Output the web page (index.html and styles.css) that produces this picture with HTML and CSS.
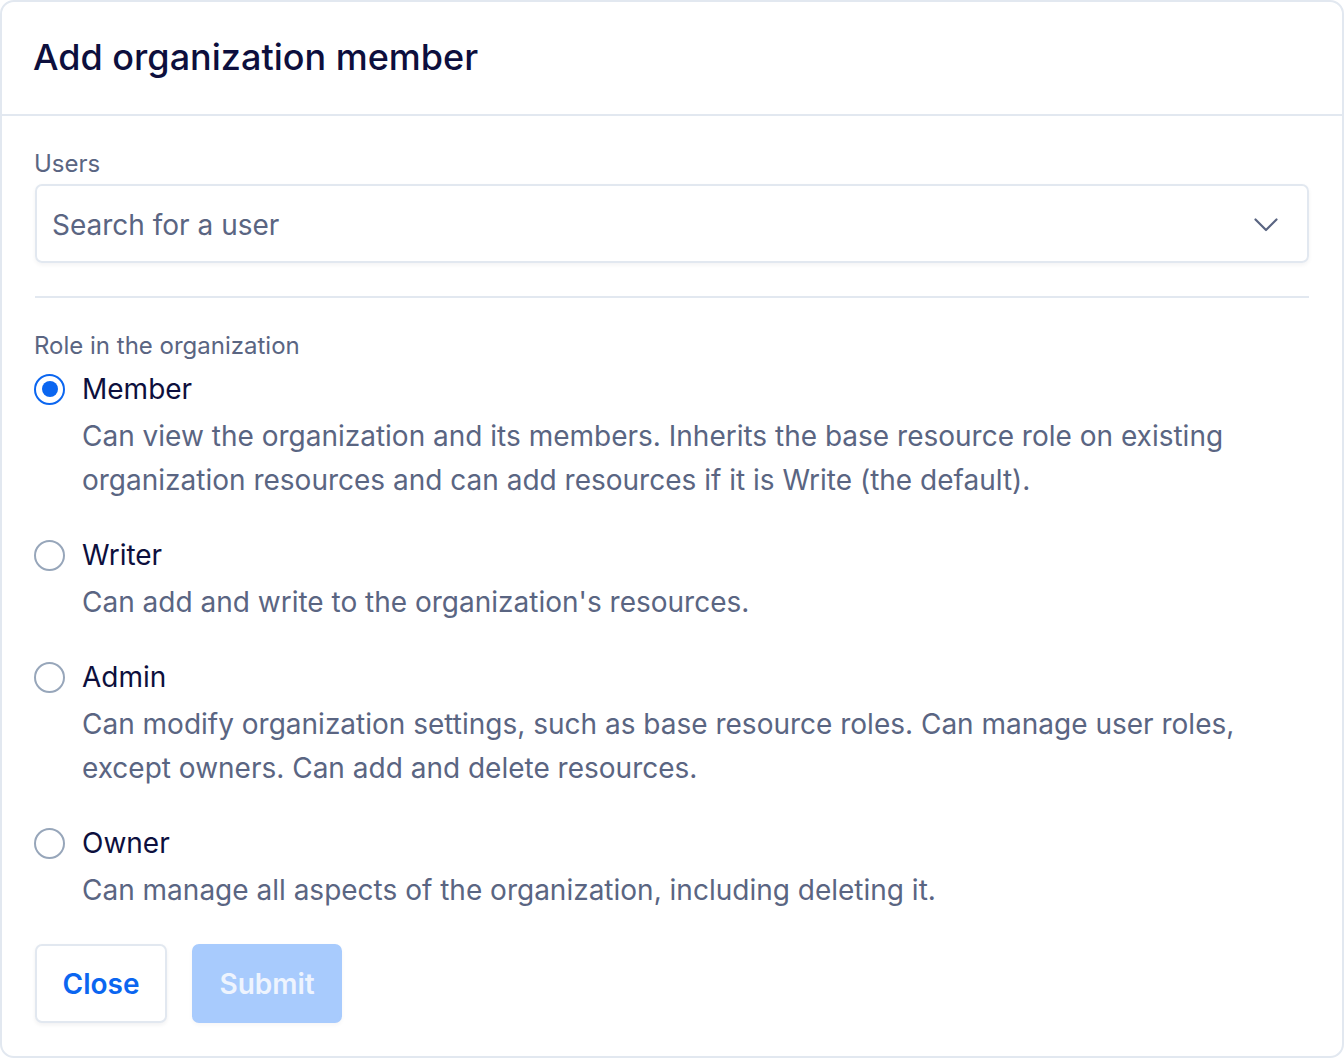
FILE: index.html
```html
<!DOCTYPE html>
<html lang="en">
<head>
<meta charset="utf-8">
<title>Add organization member</title>
<link rel="stylesheet" href="styles.css">
</head>
<body>
<div class="modal">
  <div class="modal-header">
    <h1 class="modal-title">Add organization member</h1>
  </div>
  <div class="modal-body">
    <label class="field-label">Users</label>
    <div class="select">
      <span class="select-placeholder">Search for a user</span>
      <svg class="chevron" width="24" height="14" viewBox="0 0 24 14" fill="none"><path d="M1.5 1.5 L12 12 L22.5 1.5" stroke="#5a6582" stroke-width="2.2" stroke-linecap="round" stroke-linejoin="round"/></svg>
    </div>
    <hr class="divider">
    <div class="field-label">Role in the organization</div>
    <div class="options">
      <div class="option">
        <div class="option-row"><span class="radio checked"></span><span class="option-label">Member</span></div>
        <p class="option-desc">Can view the organization and its members. Inherits the base resource role on existing organization resources and can add resources if it is Write (the default).</p>
      </div>
      <div class="option">
        <div class="option-row"><span class="radio"></span><span class="option-label">Writer</span></div>
        <p class="option-desc">Can add and write to the organization's resources.</p>
      </div>
      <div class="option">
        <div class="option-row"><span class="radio"></span><span class="option-label">Admin</span></div>
        <p class="option-desc">Can modify organization settings, such as base resource roles. Can manage user roles, except owners. Can add and delete resources.</p>
      </div>
      <div class="option">
        <div class="option-row"><span class="radio"></span><span class="option-label">Owner</span></div>
        <p class="option-desc">Can manage all aspects of the organization, including deleting it.</p>
      </div>
    </div>
    <div class="actions">
      <button class="btn btn-secondary">Close</button>
      <button class="btn btn-primary" disabled>Submit</button>
    </div>
  </div>
</div>
</body>
</html>
```
FILE: styles.css
```css
* { box-sizing: border-box; }
html, body { margin: 0; padding: 0; background: #ffffff; }
body {
  font-family: Inter, "Noto Sans", sans-serif;
  color: #0d0f3d;
  width: 1344px;
  height: 1058px;
}
.modal {
  width: 1344px;
  height: 1058px;
  border: 2px solid #e2e8f0;
  border-radius: 14px;
  background: #fff;
  display: flex;
  flex-direction: column;
}
.modal-header {
  height: 114px;
  border-bottom: 2px solid #e2e8f0;
  padding: 0 31px;
  display: flex;
  align-items: center;
}
.modal-title {
  margin: 0;
  font-size: 36px;
  font-weight: 500;
  line-height: 44px;
  color: #0d0f3d;
  margin-top: -2px;
}
.modal-body {
  padding: 32px 33px 0 33px;
  display: flex;
  flex-direction: column;
}
.field-label {
  display: block;
  font-size: 24px;
  line-height: 32px;
  color: #5a6582;
  margin-left: -1px;
}
.select {
  margin-top: 4px;
  height: 79px;
  border: 2px solid #e2e8f0;
  border-radius: 7px;
  box-shadow: 0 2px 4px rgba(15, 23, 42, 0.05);
  display: flex;
  align-items: center;
  justify-content: space-between;
  padding: 0 29px 0 15px;
}
.select-placeholder {
  font-size: 28px;
  color: #5a6582;
  margin-top: 2px;
}
.chevron { display: block; margin-top: 2px; }
.divider {
  margin: 33px 0 32px 0;
  border: 0;
  border-top: 2px solid #e2e8f0;
  height: 0;
}
.options {
  margin-top: 7px;
  display: flex;
  flex-direction: column;
  gap: 33px;
}
.option-row {
  display: flex;
  align-items: center;
  gap: 17px;
  height: 40px;
}
.radio {
  width: 31px;
  height: 31px;
  border-radius: 50%;
  border: 2px solid #97a6ba;
  flex: none;
  position: relative;
  background: #fff;
  margin-left: -1px;
}
.radio.checked {
  border-color: #0b66f0;
}
.radio.checked::after {
  content: "";
  position: absolute;
  left: 5.5px;
  top: 5.5px;
  width: 16px;
  height: 16px;
  border-radius: 50%;
  background: #0b66f0;
}
.option-label {
  font-size: 28px;
  color: #0d0f3d;
  line-height: 40px;
}
.option-desc {
  margin: 5px 0 0 47px;
  font-size: 28px;
  line-height: 44px;
  color: #5a6582;
}
.actions {
  margin-top: 32px;
  display: flex;
  gap: 25px;
}
.btn {
  height: 79px;
  border-radius: 7px;
  font-family: Inter, "Noto Sans", sans-serif;
  font-size: 28px;
  font-weight: 600;
  padding: 0 25.5px;
  cursor: pointer;
}
.btn-secondary {
  background: #fff;
  color: #0b66f0;
  border: 2px solid #e2e8f0;
  box-shadow: 0 2px 4px rgba(15, 23, 42, 0.06);
}
.btn-primary {
  background: #a8cbfd;
  color: #eef4fe;
  border: 2px solid #a8cbfd;
  box-shadow: 0 2px 4px rgba(15, 23, 42, 0.04);
}
```
